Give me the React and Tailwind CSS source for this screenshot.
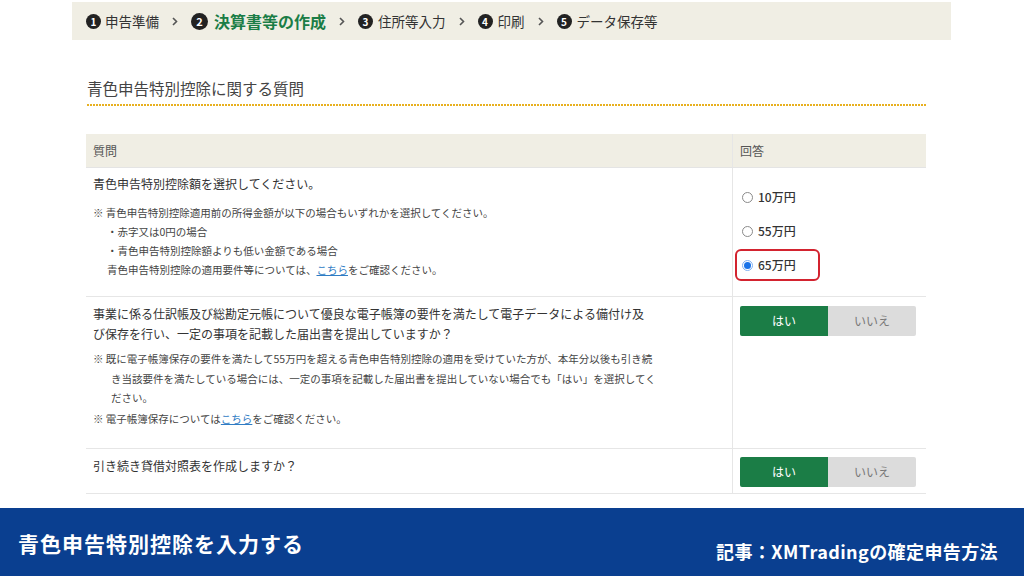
import React from "react";

const font = { fontFamily: '"Noto Sans CJK JP", "Noto Sans", sans-serif' };

function StepNum({ n, big }) {
  return (
    <span
      className={`flex items-center justify-center rounded-full bg-[#222] text-white font-bold ${
        big ? "w-[17px] h-[17px] text-[11px]" : "w-[15px] h-[15px] text-[10px]"
      }`}
    >
      {n}
    </span>
  );
}

function Chevron() {
  return (
    <svg width="6" height="9" viewBox="0 0 6 9" className="mx-[13px]">
      <polyline points="1,1 4.5,4.5 1,8" fill="none" stroke="#555" strokeWidth="1.6" />
    </svg>
  );
}

function Radio({ label, checked }) {
  return (
    <div
      className={`flex items-center h-[32px] w-[85px] pl-[5px] rounded-[6px] border-2 ${
        checked ? "border-[#d3232f]" : "border-transparent"
      }`}
    >
      {checked ? (
        <span className="w-[11px] h-[11px] rounded-full border border-[#7fb0f2] bg-white flex items-center justify-center">
          <span className="w-[7px] h-[7px] rounded-full bg-[#1a73e8]" />
        </span>
      ) : (
        <span className="w-[11px] h-[11px] rounded-full border border-[#8a8a8a] bg-white" />
      )}
      <span className="ml-[5px] text-[12px] font-medium text-[#333]">{label}</span>
    </div>
  );
}

function YesNo() {
  return (
    <div className="flex ml-[7px] h-[30px] text-[12px]">
      <div className="w-[88px] flex items-center justify-center bg-[#1b7d46] text-white rounded-l-[2px]">はい</div>
      <div className="w-[88px] flex items-center justify-center bg-[#dcdcdc] text-[#777] rounded-r-[2px]">いいえ</div>
    </div>
  );
}

function Link({ children }) {
  return <span className="text-[#2f7cc4] underline">{children}</span>;
}

export default function App() {
  return (
    <div className="w-[1024px] h-[576px] bg-white flex flex-col overflow-hidden" style={font}>
      {/* step bar */}
      <div className="mt-[2px] ml-[72px] w-[879px] h-[38px] bg-[#f0eee4] flex items-center pl-[14px] text-[13.5px] text-[#333]">
        <StepNum n="1" />
        <span className="ml-[4px]">申告準備</span>
        <Chevron />
        <StepNum n="2" big />
        <span className="ml-[6px] text-[16px] font-bold text-[#1b7d46]">決算書等の作成</span>
        <Chevron />
        <StepNum n="3" />
        <span className="ml-[5px]">住所等入力</span>
        <Chevron />
        <StepNum n="4" />
        <span className="ml-[5px]">印刷</span>
        <Chevron />
        <StepNum n="5" />
        <span className="ml-[5px]">データ保存等</span>
      </div>

      {/* title */}
      <div className="ml-[87px] w-[839px] mt-[37px]">
        <h2 className="text-[15.5px] leading-[22px] text-[#444] pb-[5px]">青色申告特別控除に関する質問</h2>
        <div className="h-[2px] bg-[repeating-linear-gradient(90deg,#e8b020_0_2px,transparent_2px_3px)]" />
      </div>

      {/* table */}
      <div className="ml-[86px] w-[840px] mt-[28px] text-[#333]">
        <div className="grid grid-cols-[646px_194px] h-[34px] bg-[#f0eee4] border-b border-[#e4e4e4] text-[12px] text-[#555]">
          <div className="flex items-center pl-[7px]">質問</div>
          <div className="flex items-center pl-[7px] border-l border-[#e6e6e6]">回答</div>
        </div>

        <div className="grid grid-cols-[646px_194px] h-[129px] border-b border-[#e6e6e6]">
          <div className="pl-[7px] pt-[6px]">
            <div className="text-[12px] leading-[20px]">青色申告特別控除額を選択してください。</div>
            <div className="mt-[9px] text-[10.5px] leading-[19px] text-[#444] whitespace-nowrap">
              <div>※ 青色申告特別控除適用前の所得金額が以下の場合もいずれかを選択してください。</div>
              <div className="pl-[14px]">・赤字又は0円の場合</div>
              <div className="pl-[14px]">・青色申告特別控除額よりも低い金額である場合</div>
              <div className="pl-[14px]">
                青色申告特別控除の適用要件等については、<Link>こちら</Link>をご確認ください。
              </div>
            </div>
          </div>
          <div className="border-l border-[#e6e6e6] pt-[13px] pl-[2px] flex flex-col gap-[2px]">
            <Radio label="10万円" />
            <Radio label="55万円" />
            <Radio label="65万円" checked />
          </div>
        </div>

        <div className="grid grid-cols-[646px_194px] h-[152px] border-b border-[#e6e6e6]">
          <div className="pl-[7px] pt-[7px]">
            <div className="text-[12px] leading-[19.5px] whitespace-nowrap">
              <div>事業に係る仕訳帳及び総勘定元帳について優良な電子帳簿の要件を満たして電子データによる備付け及</div>
              <div>び保存を行い、一定の事項を記載した届出書を提出していますか？</div>
            </div>
            <div className="mt-[6px] text-[10.5px] leading-[19.5px] text-[#444] whitespace-nowrap">
              <div>※ 既に電子帳簿保存の要件を満たして55万円を超える青色申告特別控除の適用を受けていた方が、本年分以後も引き続</div>
              <div className="pl-[18px]">き当該要件を満たしている場合には、一定の事項を記載した届出書を提出していない場合でも「はい」を選択してく</div>
              <div className="pl-[18px]">ださい。</div>
              <div className="mt-[1px]">
                ※ 電子帳簿保存については<Link>こちら</Link>をご確認ください。
              </div>
            </div>
          </div>
          <div className="border-l border-[#e6e6e6] pt-[9px]">
            <YesNo />
          </div>
        </div>

        <div className="grid grid-cols-[646px_194px] h-[45px] border-b border-[#e6e6e6]">
          <div className="pl-[7px] pt-[7px] text-[12px] leading-[20px]">引き続き貸借対照表を作成しますか？</div>
          <div className="border-l border-[#e6e6e6] pt-[8px]">
            <YesNo />
          </div>
        </div>
      </div>

      {/* banner */}
      <div className="mt-auto h-[68px] bg-[#0a3f90] flex justify-between text-white font-bold">
        <div className="pl-[18px] pt-[21px] text-[21px] leading-[28px] tracking-[1px]">青色申告特別控除を入力する</div>
        <div className="pr-[26px] pt-[31px] text-[18px] leading-[24px] tracking-[0.4px]">記事：XMTradingの確定申告方法</div>
      </div>
    </div>
  );
}
